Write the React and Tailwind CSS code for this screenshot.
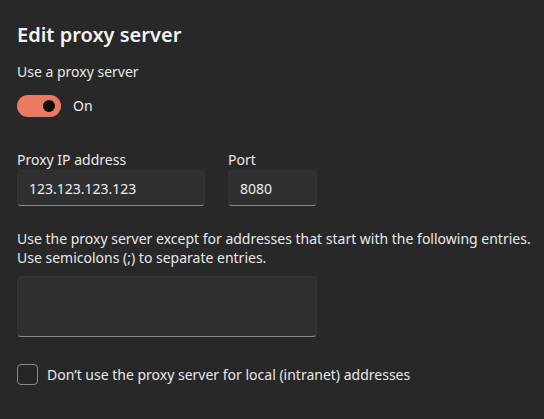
export default function App() {
  return (
    <div className="w-[544px] h-[419px] bg-[#282828] text-white overflow-hidden" style={{ fontFamily: '"Noto Sans", "Open Sans", sans-serif' }}>
      <div className="pl-[17px] pt-[21px]">
        <h1 className="text-[20px] leading-[28px] font-semibold text-[#f3f3f3]">Edit proxy server</h1>
        <div className="mt-[13px] text-[14px] leading-[20px] text-[#e8e8e8]">Use a proxy server</div>
        <div className="mt-[13px] flex items-center gap-[12px]">
          <div className="w-[44px] h-[22px] rounded-full bg-[#ec7a63] flex items-center justify-end pr-[6px]">
            <div className="w-[12px] h-[12px] rounded-full bg-[#0b0b0b]"></div>
          </div>
          <span className="text-[14px] leading-[20px] text-[#eeeeee]">On</span>
        </div>
        <div className="mt-[33px] flex gap-[23px]">
          <div className="flex flex-col">
            <span className="text-[14px] leading-[20px] text-[#e8e8e8]">Proxy IP address</span>
            <div className="w-[188px] h-[36px] rounded-[4px] bg-[#303030] border border-[#353535] border-b-[#8a8a8a] flex items-center pl-[11px] text-[14px] text-[#ededed]">123.123.123.123</div>
          </div>
          <div className="flex flex-col">
            <span className="text-[14px] leading-[20px] text-[#e8e8e8]">Port</span>
            <div className="w-[89px] h-[36px] rounded-[4px] bg-[#303030] border border-[#353535] border-b-[#8a8a8a] flex items-center pl-[11px] text-[14px] text-[#ededed]">8080</div>
          </div>
        </div>
        <p className="mt-[23px] text-[14px] leading-[19px] text-[#e8e8e8] whitespace-nowrap">
          Use the proxy server except for addresses that start with the following entries.<br />
          Use semicolons (;) to separate entries.
        </p>
        <div className="mt-[9px] w-[300px] h-[61px] rounded-[4px] bg-[#303030] border border-[#353535] border-b-[#8a8a8a]"></div>
        <div className="mt-[27px] flex items-center gap-[9px]">
          <div className="w-[21px] h-[21px] rounded-[4px] border border-[#8a8a8a] bg-[#262626]"></div>
          <span className="text-[14px] leading-[20px] text-[#e8e8e8]">Don’t use the proxy server for local (intranet) addresses</span>
        </div>
      </div>
    </div>
  );
}
